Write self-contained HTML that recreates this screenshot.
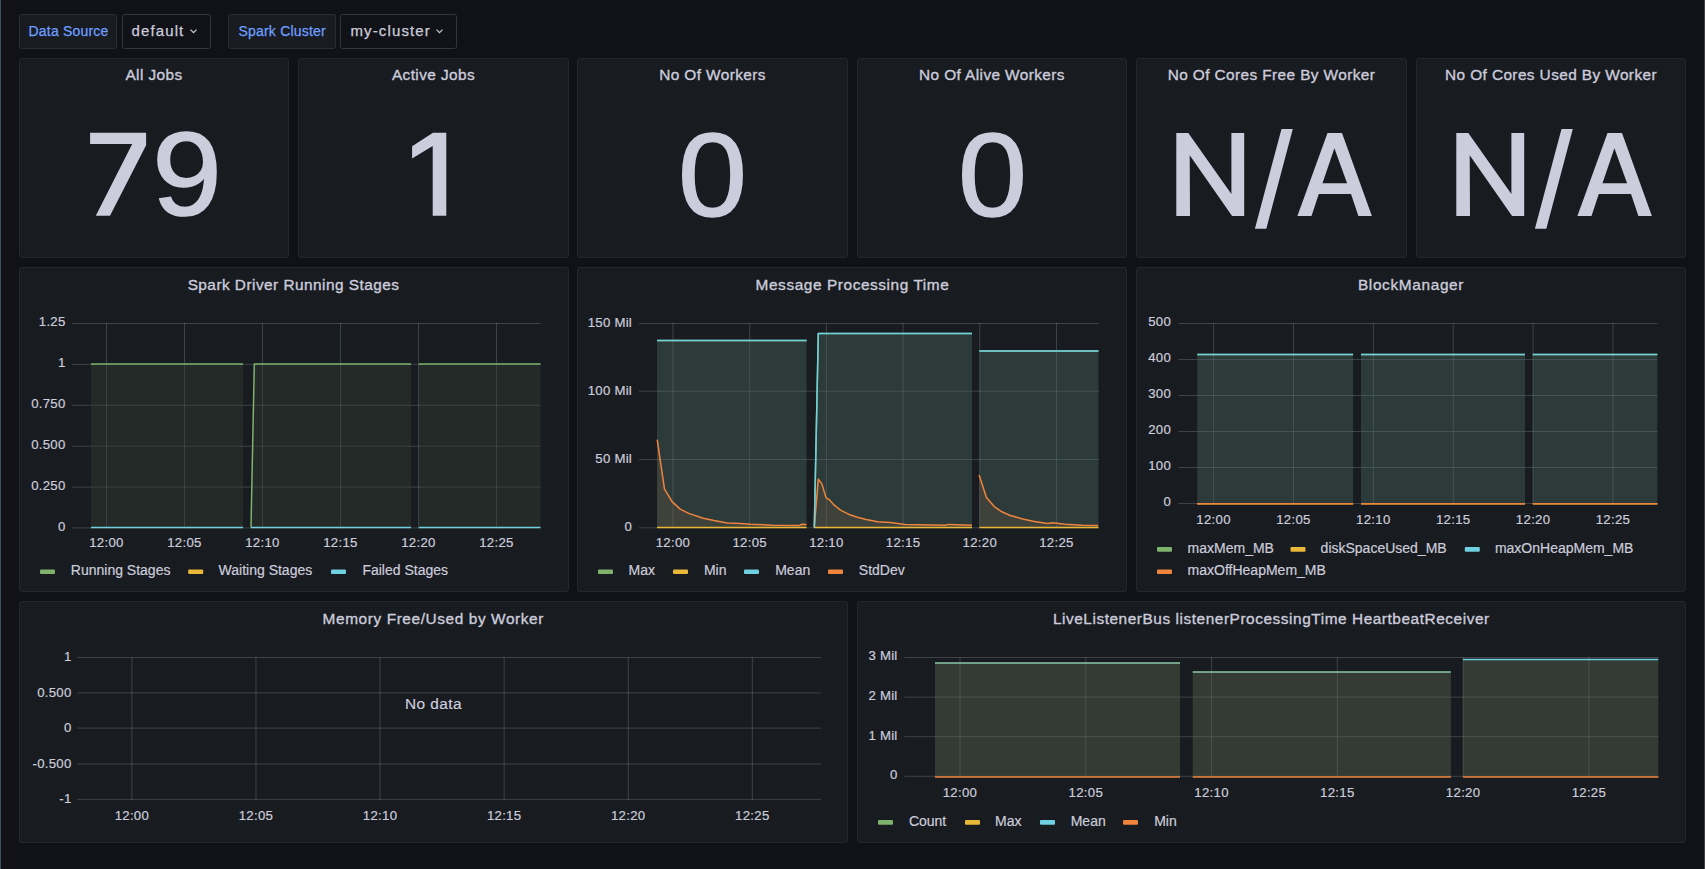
<!DOCTYPE html>
<html><head><meta charset="utf-8"><title>Spark Dashboard</title>
<style>
html,body{margin:0;padding:0;background:#111217;width:1705px;height:869px;overflow:hidden}
svg{position:absolute;left:0;top:0;font-family:'Liberation Sans', sans-serif}
</style></head><body>
<svg width="1705" height="869" viewBox="0 0 1705 869">
<rect x="0" y="0" width="1705" height="869" fill="#111217"/>
<rect x="0" y="0" width="1" height="869" fill="#3b525c"/>
<rect x="1704" y="0" width="1" height="869" fill="#434343"/>
<rect x="19.5" y="14.5" width="97" height="34" rx="2" fill="#181b1f" stroke="#2a2d33"/>
<text x="28.5" y="36" font-size="14" text-anchor="start" fill="#6e9fff" letter-spacing="0.2" font-weight="400" stroke="#6e9fff" stroke-width="0.25">Data Source</text>
<rect x="122.5" y="14.5" width="88" height="34" rx="2" fill="#111217" stroke="#34363c"/>
<text x="131.5" y="36" font-size="15" text-anchor="start" fill="#ccccdc" letter-spacing="1.12" font-weight="400" stroke="#ccccdc" stroke-width="0.25">default</text>
<path d="M190.5 29.6 L193.5 32.6 L196.5 29.6" fill="none" stroke="#ccccdc" stroke-width="1.2"/>
<rect x="228.5" y="14.5" width="107" height="34" rx="2" fill="#181b1f" stroke="#2a2d33"/>
<text x="238.5" y="36" font-size="14" text-anchor="start" fill="#6e9fff" letter-spacing="0.2" font-weight="400" stroke="#6e9fff" stroke-width="0.25">Spark Cluster</text>
<rect x="340.5" y="14.5" width="116" height="34" rx="2" fill="#111217" stroke="#34363c"/>
<text x="350.5" y="36" font-size="15" text-anchor="start" fill="#ccccdc" letter-spacing="1.12" font-weight="400" stroke="#ccccdc" stroke-width="0.25">my-cluster</text>
<path d="M436.5 29.6 L439.5 32.6 L442.5 29.6" fill="none" stroke="#ccccdc" stroke-width="1.2"/>
<rect x="19.5" y="58.5" width="269" height="199" rx="2.5" ry="2.5" fill="#181b1f" stroke="#25272c" stroke-width="1"/>
<text x="154.0" y="80.3" font-size="15.4" text-anchor="middle" fill="#ccccdc" letter-spacing="0.4" font-weight="400" stroke="#ccccdc" stroke-width="0.35">All Jobs</text>
<rect x="298.5" y="58.5" width="270" height="199" rx="2.5" ry="2.5" fill="#181b1f" stroke="#25272c" stroke-width="1"/>
<text x="433.5" y="80.3" font-size="15.4" text-anchor="middle" fill="#ccccdc" letter-spacing="0.4" font-weight="400" stroke="#ccccdc" stroke-width="0.35">Active Jobs</text>
<rect x="577.5" y="58.5" width="270" height="199" rx="2.5" ry="2.5" fill="#181b1f" stroke="#25272c" stroke-width="1"/>
<text x="712.5" y="80.3" font-size="15.4" text-anchor="middle" fill="#ccccdc" letter-spacing="0.4" font-weight="400" stroke="#ccccdc" stroke-width="0.35">No Of Workers</text>
<rect x="857.5" y="58.5" width="269" height="199" rx="2.5" ry="2.5" fill="#181b1f" stroke="#25272c" stroke-width="1"/>
<text x="992.0" y="80.3" font-size="15.4" text-anchor="middle" fill="#ccccdc" letter-spacing="0.4" font-weight="400" stroke="#ccccdc" stroke-width="0.35">No Of Alive Workers</text>
<rect x="1136.5" y="58.5" width="270" height="199" rx="2.5" ry="2.5" fill="#181b1f" stroke="#25272c" stroke-width="1"/>
<text x="1271.5" y="80.3" font-size="15.4" text-anchor="middle" fill="#ccccdc" letter-spacing="0.4" font-weight="400" stroke="#ccccdc" stroke-width="0.35">No Of Cores Free By Worker</text>
<rect x="1416.5" y="58.5" width="269" height="199" rx="2.5" ry="2.5" fill="#181b1f" stroke="#25272c" stroke-width="1"/>
<text x="1551.0" y="80.3" font-size="15.4" text-anchor="middle" fill="#ccccdc" letter-spacing="0.4" font-weight="400" stroke="#ccccdc" stroke-width="0.35">No Of Cores Used By Worker</text>
<path d="M90.10 132.70 L146.10 132.70 L146.10 145.30 L110.00 215.80 L95.80 215.80 L132.20 144.10 L90.10 144.10 Z" fill="#ccccdc"/>
<g transform="translate(187 0) scale(1.06 1) translate(-187 0)"><text x="187" y="215.3" font-size="118" text-anchor="middle" fill="#ccccdc" stroke="#ccccdc" stroke-width="1.7">9</text></g>
<path d="M412.10 146.20 L433.00 132.70 L446.30 132.70 L446.30 215.80 L432.70 215.80 L432.70 146.00 L412.10 158.60 Z" fill="#ccccdc"/>
<g transform="translate(712.4 0) scale(1.05 1) translate(-712.4 0)"><text x="712.4" y="216.1" font-size="118" text-anchor="middle" fill="#ccccdc" stroke="#ccccdc" stroke-width="1.6">0</text></g>
<g transform="translate(992.4 0) scale(1.05 1) translate(-992.4 0)"><text x="992.4" y="216.1" font-size="118" text-anchor="middle" fill="#ccccdc" stroke="#ccccdc" stroke-width="1.6">0</text></g>
<path d="M1176.30 133.10 L1188.30 133.10 L1231.40 193.90 L1231.40 133.10 L1244.20 133.10 L1244.20 216.00 L1232.10 216.00 L1189.70 155.20 L1190.00 216.00 L1176.30 216.00 Z M1281.50 129.00 L1292.80 129.00 L1266.30 228.70 L1254.90 228.70 Z M1327.50 133.10 L1342.00 133.10 L1371.90 216.00 L1358.40 216.00 L1351.00 193.90 L1318.80 193.90 L1311.50 216.00 L1297.40 216.00 Z M1334.40 148.30 L1347.10 183.20 L1322.50 183.20 Z" fill="#ccccdc" fill-rule="evenodd"/>
<path d="M1456.30 133.10 L1468.30 133.10 L1511.40 193.90 L1511.40 133.10 L1524.20 133.10 L1524.20 216.00 L1512.10 216.00 L1469.70 155.20 L1470.00 216.00 L1456.30 216.00 Z M1561.50 129.00 L1572.80 129.00 L1546.30 228.70 L1534.90 228.70 Z M1607.50 133.10 L1622.00 133.10 L1651.90 216.00 L1638.40 216.00 L1631.00 193.90 L1598.80 193.90 L1591.50 216.00 L1577.40 216.00 Z M1614.40 148.30 L1627.10 183.20 L1602.50 183.20 Z" fill="#ccccdc" fill-rule="evenodd"/>
<rect x="19.5" y="267.5" width="549" height="324" rx="2.5" ry="2.5" fill="#181b1f" stroke="#25272c" stroke-width="1"/>
<text x="293.5" y="290" font-size="15.4" text-anchor="middle" fill="#ccccdc" letter-spacing="0.46" font-weight="400" stroke="#ccccdc" stroke-width="0.35">Spark Driver Running Stages</text>
<text x="65.5" y="326.4" font-size="13.2" text-anchor="end" fill="#ccccdc" letter-spacing="0.25" font-weight="400" stroke="#ccccdc" stroke-width="0.2">1.25</text>
<text x="65.5" y="367.29999999999995" font-size="13.2" text-anchor="end" fill="#ccccdc" letter-spacing="0.25" font-weight="400" stroke="#ccccdc" stroke-width="0.2">1</text>
<text x="65.5" y="408.2" font-size="13.2" text-anchor="end" fill="#ccccdc" letter-spacing="0.25" font-weight="400" stroke="#ccccdc" stroke-width="0.2">0.750</text>
<text x="65.5" y="449.09999999999997" font-size="13.2" text-anchor="end" fill="#ccccdc" letter-spacing="0.25" font-weight="400" stroke="#ccccdc" stroke-width="0.2">0.500</text>
<text x="65.5" y="490.0" font-size="13.2" text-anchor="end" fill="#ccccdc" letter-spacing="0.25" font-weight="400" stroke="#ccccdc" stroke-width="0.2">0.250</text>
<text x="65.5" y="530.8" font-size="13.2" text-anchor="end" fill="#ccccdc" letter-spacing="0.25" font-weight="400" stroke="#ccccdc" stroke-width="0.2">0</text>
<text x="106.5" y="547" font-size="13.2" text-anchor="middle" fill="#ccccdc" letter-spacing="0.3" font-weight="400" stroke="#ccccdc" stroke-width="0.2">12:00</text>
<text x="184.5" y="547" font-size="13.2" text-anchor="middle" fill="#ccccdc" letter-spacing="0.3" font-weight="400" stroke="#ccccdc" stroke-width="0.2">12:05</text>
<text x="262.5" y="547" font-size="13.2" text-anchor="middle" fill="#ccccdc" letter-spacing="0.3" font-weight="400" stroke="#ccccdc" stroke-width="0.2">12:10</text>
<text x="340.5" y="547" font-size="13.2" text-anchor="middle" fill="#ccccdc" letter-spacing="0.3" font-weight="400" stroke="#ccccdc" stroke-width="0.2">12:15</text>
<text x="418.5" y="547" font-size="13.2" text-anchor="middle" fill="#ccccdc" letter-spacing="0.3" font-weight="400" stroke="#ccccdc" stroke-width="0.2">12:20</text>
<text x="496.5" y="547" font-size="13.2" text-anchor="middle" fill="#ccccdc" letter-spacing="0.3" font-weight="400" stroke="#ccccdc" stroke-width="0.2">12:25</text>
<rect x="40" y="569.4" width="15" height="4.6" rx="1" fill="#7eb26d"/>
<text x="70.8" y="575" font-size="14" text-anchor="start" fill="#ccccdc" letter-spacing="0" font-weight="400" stroke="#ccccdc" stroke-width="0.2">Running Stages</text>
<rect x="188.2" y="569.4" width="15" height="4.6" rx="1" fill="#eab839"/>
<text x="218.6" y="575" font-size="14" text-anchor="start" fill="#ccccdc" letter-spacing="0" font-weight="400" stroke="#ccccdc" stroke-width="0.2">Waiting Stages</text>
<rect x="331" y="569.4" width="15" height="4.6" rx="1" fill="#6ed0e0"/>
<text x="362.4" y="575" font-size="14" text-anchor="start" fill="#ccccdc" letter-spacing="0" font-weight="400" stroke="#ccccdc" stroke-width="0.2">Failed Stages</text>
<line x1="72" y1="323.5" x2="540.5" y2="323.5" stroke="rgba(240,250,255,0.175)" stroke-width="1"/>
<line x1="72" y1="364.4" x2="540.5" y2="364.4" stroke="rgba(240,250,255,0.175)" stroke-width="1"/>
<line x1="72" y1="405.3" x2="540.5" y2="405.3" stroke="rgba(240,250,255,0.175)" stroke-width="1"/>
<line x1="72" y1="446.2" x2="540.5" y2="446.2" stroke="rgba(240,250,255,0.175)" stroke-width="1"/>
<line x1="72" y1="487.1" x2="540.5" y2="487.1" stroke="rgba(240,250,255,0.175)" stroke-width="1"/>
<line x1="72" y1="527.9" x2="540.5" y2="527.9" stroke="rgba(240,250,255,0.175)" stroke-width="1"/>
<line x1="106.5" y1="323" x2="106.5" y2="528.4" stroke="rgba(240,250,255,0.175)" stroke-width="1"/>
<line x1="184.5" y1="323" x2="184.5" y2="528.4" stroke="rgba(240,250,255,0.175)" stroke-width="1"/>
<line x1="262.5" y1="323" x2="262.5" y2="528.4" stroke="rgba(240,250,255,0.175)" stroke-width="1"/>
<line x1="340.5" y1="323" x2="340.5" y2="528.4" stroke="rgba(240,250,255,0.175)" stroke-width="1"/>
<line x1="418.5" y1="323" x2="418.5" y2="528.4" stroke="rgba(240,250,255,0.175)" stroke-width="1"/>
<line x1="496.5" y1="323" x2="496.5" y2="528.4" stroke="rgba(240,250,255,0.175)" stroke-width="1"/>
<path d="M91.00 364.00 L243.00 364.00 L243.00 527.0 L91.00 527.0 Z" fill="#364036" fill-opacity="0.4"/>
<path d="M251.00 527.50 L254.30 364.00 L411.00 364.00 L411.00 527.0 L251.00 527.0 Z" fill="#364036" fill-opacity="0.4"/>
<path d="M419.00 364.00 L540.50 364.00 L540.50 527.0 L419.00 527.0 Z" fill="#364036" fill-opacity="0.4"/>
<path d="M91.00 364.00 L243.00 364.00" fill="none" stroke="#7eb26d" stroke-width="1.5" stroke-linejoin="round"/>
<path d="M251.00 527.50 L254.30 364.00 L411.00 364.00" fill="none" stroke="#7eb26d" stroke-width="1.5" stroke-linejoin="round"/>
<path d="M419.00 364.00 L540.50 364.00" fill="none" stroke="#7eb26d" stroke-width="1.5" stroke-linejoin="round"/>
<path d="M91.00 527.50 L243.00 527.50" fill="none" stroke="#6ed0e0" stroke-width="1.5" stroke-linejoin="round"/>
<path d="M251.00 527.50 L411.00 527.50" fill="none" stroke="#6ed0e0" stroke-width="1.5" stroke-linejoin="round"/>
<path d="M419.00 527.50 L540.50 527.50" fill="none" stroke="#6ed0e0" stroke-width="1.5" stroke-linejoin="round"/>
<rect x="577.5" y="267.5" width="549" height="324" rx="2.5" ry="2.5" fill="#181b1f" stroke="#25272c" stroke-width="1"/>
<text x="852.5" y="290" font-size="15.4" text-anchor="middle" fill="#ccccdc" letter-spacing="0.58" font-weight="400" stroke="#ccccdc" stroke-width="0.35">Message Processing Time</text>
<text x="632" y="326.8" font-size="13.2" text-anchor="end" fill="#ccccdc" letter-spacing="0.25" font-weight="400" stroke="#ccccdc" stroke-width="0.2">150 Mil</text>
<text x="632" y="394.5" font-size="13.2" text-anchor="end" fill="#ccccdc" letter-spacing="0.25" font-weight="400" stroke="#ccccdc" stroke-width="0.2">100 Mil</text>
<text x="632" y="462.8" font-size="13.2" text-anchor="end" fill="#ccccdc" letter-spacing="0.25" font-weight="400" stroke="#ccccdc" stroke-width="0.2">50 Mil</text>
<text x="632" y="531.0999999999999" font-size="13.2" text-anchor="end" fill="#ccccdc" letter-spacing="0.25" font-weight="400" stroke="#ccccdc" stroke-width="0.2">0</text>
<text x="673.0" y="547" font-size="13.2" text-anchor="middle" fill="#ccccdc" letter-spacing="0.3" font-weight="400" stroke="#ccccdc" stroke-width="0.2">12:00</text>
<text x="749.7" y="547" font-size="13.2" text-anchor="middle" fill="#ccccdc" letter-spacing="0.3" font-weight="400" stroke="#ccccdc" stroke-width="0.2">12:05</text>
<text x="826.4" y="547" font-size="13.2" text-anchor="middle" fill="#ccccdc" letter-spacing="0.3" font-weight="400" stroke="#ccccdc" stroke-width="0.2">12:10</text>
<text x="903.1" y="547" font-size="13.2" text-anchor="middle" fill="#ccccdc" letter-spacing="0.3" font-weight="400" stroke="#ccccdc" stroke-width="0.2">12:15</text>
<text x="979.8" y="547" font-size="13.2" text-anchor="middle" fill="#ccccdc" letter-spacing="0.3" font-weight="400" stroke="#ccccdc" stroke-width="0.2">12:20</text>
<text x="1056.5" y="547" font-size="13.2" text-anchor="middle" fill="#ccccdc" letter-spacing="0.3" font-weight="400" stroke="#ccccdc" stroke-width="0.2">12:25</text>
<rect x="598" y="569.4" width="15" height="4.6" rx="1" fill="#7eb26d"/>
<text x="628.5" y="575" font-size="14" text-anchor="start" fill="#ccccdc" letter-spacing="0" font-weight="400" stroke="#ccccdc" stroke-width="0.2">Max</text>
<rect x="673" y="569.4" width="15" height="4.6" rx="1" fill="#eab839"/>
<text x="703.9" y="575" font-size="14" text-anchor="start" fill="#ccccdc" letter-spacing="0" font-weight="400" stroke="#ccccdc" stroke-width="0.2">Min</text>
<rect x="744" y="569.4" width="15" height="4.6" rx="1" fill="#6ed0e0"/>
<text x="775.2" y="575" font-size="14" text-anchor="start" fill="#ccccdc" letter-spacing="0" font-weight="400" stroke="#ccccdc" stroke-width="0.2">Mean</text>
<rect x="828" y="569.4" width="15" height="4.6" rx="1" fill="#ef843c"/>
<text x="858.8" y="575" font-size="14" text-anchor="start" fill="#ccccdc" letter-spacing="0" font-weight="400" stroke="#ccccdc" stroke-width="0.2">StdDev</text>
<line x1="639" y1="323.5" x2="1099" y2="323.5" stroke="rgba(240,250,255,0.175)" stroke-width="1"/>
<line x1="639" y1="391.2" x2="1099" y2="391.2" stroke="rgba(240,250,255,0.175)" stroke-width="1"/>
<line x1="639" y1="459.5" x2="1099" y2="459.5" stroke="rgba(240,250,255,0.175)" stroke-width="1"/>
<line x1="639" y1="527.8" x2="1099" y2="527.8" stroke="rgba(240,250,255,0.175)" stroke-width="1"/>
<line x1="673.0" y1="323" x2="673.0" y2="528.3" stroke="rgba(240,250,255,0.175)" stroke-width="1"/>
<line x1="749.7" y1="323" x2="749.7" y2="528.3" stroke="rgba(240,250,255,0.175)" stroke-width="1"/>
<line x1="826.4" y1="323" x2="826.4" y2="528.3" stroke="rgba(240,250,255,0.175)" stroke-width="1"/>
<line x1="903.1" y1="323" x2="903.1" y2="528.3" stroke="rgba(240,250,255,0.175)" stroke-width="1"/>
<line x1="979.8" y1="323" x2="979.8" y2="528.3" stroke="rgba(240,250,255,0.175)" stroke-width="1"/>
<line x1="1056.5" y1="323" x2="1056.5" y2="528.3" stroke="rgba(240,250,255,0.175)" stroke-width="1"/>
<path d="M657.00 340.40 L806.60 340.40 L806.60 527.5 L657.00 527.5 Z" fill="#4a6b65" fill-opacity="0.4"/>
<path d="M814.30 527.50 L818.30 333.50 L972.00 333.50 L972.00 527.5 L814.30 527.5 Z" fill="#4a6b65" fill-opacity="0.4"/>
<path d="M979.40 350.90 L1098.50 350.90 L1098.50 527.5 L979.40 527.5 Z" fill="#4a6b65" fill-opacity="0.4"/>
<path d="M657.20 439.70 L664.50 489.20 L672.30 501.90 L680.20 509.10 L688.70 513.40 L703.20 518.20 L714.00 520.60 L727.30 523.00 L740.00 523.60 L749.80 524.30 L772.30 525.20 L798.80 525.60 L802.10 524.30 L806.60 524.60 L806.60 527.5 L657.20 527.5 Z" fill="#ef843c" fill-opacity="0.1"/>
<path d="M814.30 527.50 L818.30 479.10 L821.90 483.90 L826.00 497.60 L829.20 499.60 L834.00 504.90 L840.50 510.10 L848.50 514.20 L856.60 517.00 L866.20 519.40 L877.50 521.80 L890.40 522.60 L905.00 524.60 L946.00 525.30 L948.40 524.40 L972.00 525.30 L972.00 527.5 L814.30 527.5 Z" fill="#ef843c" fill-opacity="0.1"/>
<path d="M979.10 475.10 L986.40 497.50 L994.20 506.60 L1001.90 511.80 L1009.70 515.20 L1021.80 518.70 L1033.00 521.30 L1047.70 523.40 L1052.90 522.80 L1064.90 524.30 L1082.20 525.20 L1098.20 525.40 L1098.20 527.5 L979.10 527.5 Z" fill="#ef843c" fill-opacity="0.1"/>
<path d="M657.00 340.40 L806.60 340.40" fill="none" stroke="#7eb26d" stroke-width="1.5" stroke-linejoin="round"/>
<path d="M814.30 527.50 L818.30 333.50 L972.00 333.50" fill="none" stroke="#7eb26d" stroke-width="1.5" stroke-linejoin="round"/>
<path d="M979.40 350.90 L1098.50 350.90" fill="none" stroke="#7eb26d" stroke-width="1.5" stroke-linejoin="round"/>
<path d="M657.20 439.70 L664.50 489.20 L672.30 501.90 L680.20 509.10 L688.70 513.40 L703.20 518.20 L714.00 520.60 L727.30 523.00 L740.00 523.60 L749.80 524.30 L772.30 525.20 L798.80 525.60 L802.10 524.30 L806.60 524.60" fill="none" stroke="#ef843c" stroke-width="1.5" stroke-linejoin="round"/>
<path d="M814.30 527.50 L818.30 479.10 L821.90 483.90 L826.00 497.60 L829.20 499.60 L834.00 504.90 L840.50 510.10 L848.50 514.20 L856.60 517.00 L866.20 519.40 L877.50 521.80 L890.40 522.60 L905.00 524.60 L946.00 525.30 L948.40 524.40 L972.00 525.30" fill="none" stroke="#ef843c" stroke-width="1.5" stroke-linejoin="round"/>
<path d="M979.10 475.10 L986.40 497.50 L994.20 506.60 L1001.90 511.80 L1009.70 515.20 L1021.80 518.70 L1033.00 521.30 L1047.70 523.40 L1052.90 522.80 L1064.90 524.30 L1082.20 525.20 L1098.20 525.40" fill="none" stroke="#ef843c" stroke-width="1.5" stroke-linejoin="round"/>
<path d="M657.00 527.50 L806.60 527.50" fill="none" stroke="#eab839" stroke-width="1.5" stroke-linejoin="round"/>
<path d="M814.30 527.50 L972.00 527.50" fill="none" stroke="#eab839" stroke-width="1.5" stroke-linejoin="round"/>
<path d="M979.40 527.50 L1098.50 527.50" fill="none" stroke="#eab839" stroke-width="1.5" stroke-linejoin="round"/>
<path d="M657.00 340.40 L806.60 340.40" fill="none" stroke="#6ed0e0" stroke-width="1.5" stroke-linejoin="round"/>
<path d="M814.30 527.50 L818.30 333.50 L972.00 333.50" fill="none" stroke="#6ed0e0" stroke-width="1.5" stroke-linejoin="round"/>
<path d="M979.40 350.90 L1098.50 350.90" fill="none" stroke="#6ed0e0" stroke-width="1.5" stroke-linejoin="round"/>
<rect x="1136.5" y="267.5" width="549" height="324" rx="2.5" ry="2.5" fill="#181b1f" stroke="#25272c" stroke-width="1"/>
<text x="1411" y="290" font-size="15.4" text-anchor="middle" fill="#ccccdc" letter-spacing="0.65" font-weight="400" stroke="#ccccdc" stroke-width="0.35">BlockManager</text>
<text x="1171" y="326.4" font-size="13.2" text-anchor="end" fill="#ccccdc" letter-spacing="0.25" font-weight="400" stroke="#ccccdc" stroke-width="0.2">500</text>
<text x="1171" y="362.4" font-size="13.2" text-anchor="end" fill="#ccccdc" letter-spacing="0.25" font-weight="400" stroke="#ccccdc" stroke-width="0.2">400</text>
<text x="1171" y="398.4" font-size="13.2" text-anchor="end" fill="#ccccdc" letter-spacing="0.25" font-weight="400" stroke="#ccccdc" stroke-width="0.2">300</text>
<text x="1171" y="434.4" font-size="13.2" text-anchor="end" fill="#ccccdc" letter-spacing="0.25" font-weight="400" stroke="#ccccdc" stroke-width="0.2">200</text>
<text x="1171" y="470.4" font-size="13.2" text-anchor="end" fill="#ccccdc" letter-spacing="0.25" font-weight="400" stroke="#ccccdc" stroke-width="0.2">100</text>
<text x="1171" y="506.4" font-size="13.2" text-anchor="end" fill="#ccccdc" letter-spacing="0.25" font-weight="400" stroke="#ccccdc" stroke-width="0.2">0</text>
<text x="1213.6" y="524" font-size="13.2" text-anchor="middle" fill="#ccccdc" letter-spacing="0.3" font-weight="400" stroke="#ccccdc" stroke-width="0.2">12:00</text>
<text x="1293.48" y="524" font-size="13.2" text-anchor="middle" fill="#ccccdc" letter-spacing="0.3" font-weight="400" stroke="#ccccdc" stroke-width="0.2">12:05</text>
<text x="1373.36" y="524" font-size="13.2" text-anchor="middle" fill="#ccccdc" letter-spacing="0.3" font-weight="400" stroke="#ccccdc" stroke-width="0.2">12:10</text>
<text x="1453.2399999999998" y="524" font-size="13.2" text-anchor="middle" fill="#ccccdc" letter-spacing="0.3" font-weight="400" stroke="#ccccdc" stroke-width="0.2">12:15</text>
<text x="1533.12" y="524" font-size="13.2" text-anchor="middle" fill="#ccccdc" letter-spacing="0.3" font-weight="400" stroke="#ccccdc" stroke-width="0.2">12:20</text>
<text x="1613.0" y="524" font-size="13.2" text-anchor="middle" fill="#ccccdc" letter-spacing="0.3" font-weight="400" stroke="#ccccdc" stroke-width="0.2">12:25</text>
<rect x="1157" y="547.1" width="15" height="4.6" rx="1" fill="#7eb26d"/>
<text x="1187.6" y="552.7" font-size="14" text-anchor="start" fill="#ccccdc" letter-spacing="0" font-weight="400" stroke="#ccccdc" stroke-width="0.2">maxMem_MB</text>
<rect x="1290.5" y="547.1" width="15" height="4.6" rx="1" fill="#eab839"/>
<text x="1320.6" y="552.7" font-size="14" text-anchor="start" fill="#ccccdc" letter-spacing="0" font-weight="400" stroke="#ccccdc" stroke-width="0.2">diskSpaceUsed_MB</text>
<rect x="1464.8" y="547.1" width="15" height="4.6" rx="1" fill="#6ed0e0"/>
<text x="1494.9" y="552.7" font-size="14" text-anchor="start" fill="#ccccdc" letter-spacing="0" font-weight="400" stroke="#ccccdc" stroke-width="0.2">maxOnHeapMem_MB</text>
<rect x="1157" y="569.4" width="15" height="4.6" rx="1" fill="#ef843c"/>
<text x="1187.6" y="575" font-size="14" text-anchor="start" fill="#ccccdc" letter-spacing="0" font-weight="400" stroke="#ccccdc" stroke-width="0.2">maxOffHeapMem_MB</text>
<line x1="1178" y1="323.5" x2="1657.5" y2="323.5" stroke="rgba(240,250,255,0.175)" stroke-width="1"/>
<line x1="1178" y1="359.5" x2="1657.5" y2="359.5" stroke="rgba(240,250,255,0.175)" stroke-width="1"/>
<line x1="1178" y1="395.5" x2="1657.5" y2="395.5" stroke="rgba(240,250,255,0.175)" stroke-width="1"/>
<line x1="1178" y1="431.5" x2="1657.5" y2="431.5" stroke="rgba(240,250,255,0.175)" stroke-width="1"/>
<line x1="1178" y1="467.5" x2="1657.5" y2="467.5" stroke="rgba(240,250,255,0.175)" stroke-width="1"/>
<line x1="1178" y1="503.5" x2="1657.5" y2="503.5" stroke="rgba(240,250,255,0.175)" stroke-width="1"/>
<line x1="1213.6" y1="323" x2="1213.6" y2="504" stroke="rgba(240,250,255,0.175)" stroke-width="1"/>
<line x1="1293.48" y1="323" x2="1293.48" y2="504" stroke="rgba(240,250,255,0.175)" stroke-width="1"/>
<line x1="1373.36" y1="323" x2="1373.36" y2="504" stroke="rgba(240,250,255,0.175)" stroke-width="1"/>
<line x1="1453.2399999999998" y1="323" x2="1453.2399999999998" y2="504" stroke="rgba(240,250,255,0.175)" stroke-width="1"/>
<line x1="1533.12" y1="323" x2="1533.12" y2="504" stroke="rgba(240,250,255,0.175)" stroke-width="1"/>
<line x1="1613.0" y1="323" x2="1613.0" y2="504" stroke="rgba(240,250,255,0.175)" stroke-width="1"/>
<path d="M1197.30 354.40 L1353.10 354.40 L1353.10 503.5 L1197.30 503.5 Z" fill="#4a6b65" fill-opacity="0.4"/>
<path d="M1361.00 354.40 L1525.00 354.40 L1525.00 503.5 L1361.00 503.5 Z" fill="#4a6b65" fill-opacity="0.4"/>
<path d="M1532.80 354.40 L1657.30 354.40 L1657.30 503.5 L1532.80 503.5 Z" fill="#4a6b65" fill-opacity="0.4"/>
<path d="M1197.30 354.40 L1353.10 354.40" fill="none" stroke="#7eb26d" stroke-width="1.5" stroke-linejoin="round"/>
<path d="M1197.30 503.80 L1353.10 503.80" fill="none" stroke="#eab839" stroke-width="1.5" stroke-linejoin="round"/>
<path d="M1197.30 354.40 L1353.10 354.40" fill="none" stroke="#6ed0e0" stroke-width="1.5" stroke-linejoin="round"/>
<path d="M1197.30 503.80 L1353.10 503.80" fill="none" stroke="#ef843c" stroke-width="1.5" stroke-linejoin="round"/>
<path d="M1361.00 354.40 L1525.00 354.40" fill="none" stroke="#7eb26d" stroke-width="1.5" stroke-linejoin="round"/>
<path d="M1361.00 503.80 L1525.00 503.80" fill="none" stroke="#eab839" stroke-width="1.5" stroke-linejoin="round"/>
<path d="M1361.00 354.40 L1525.00 354.40" fill="none" stroke="#6ed0e0" stroke-width="1.5" stroke-linejoin="round"/>
<path d="M1361.00 503.80 L1525.00 503.80" fill="none" stroke="#ef843c" stroke-width="1.5" stroke-linejoin="round"/>
<path d="M1532.80 354.40 L1657.30 354.40" fill="none" stroke="#7eb26d" stroke-width="1.5" stroke-linejoin="round"/>
<path d="M1532.80 503.80 L1657.30 503.80" fill="none" stroke="#eab839" stroke-width="1.5" stroke-linejoin="round"/>
<path d="M1532.80 354.40 L1657.30 354.40" fill="none" stroke="#6ed0e0" stroke-width="1.5" stroke-linejoin="round"/>
<path d="M1532.80 503.80 L1657.30 503.80" fill="none" stroke="#ef843c" stroke-width="1.5" stroke-linejoin="round"/>
<rect x="19.5" y="601.5" width="828" height="241" rx="2.5" ry="2.5" fill="#181b1f" stroke="#25272c" stroke-width="1"/>
<text x="433.3" y="624.4" font-size="15.4" text-anchor="middle" fill="#ccccdc" letter-spacing="0.6" font-weight="400" stroke="#ccccdc" stroke-width="0.35">Memory Free/Used by Worker</text>
<text x="71.5" y="661.2" font-size="13.2" text-anchor="end" fill="#ccccdc" letter-spacing="0.25" font-weight="400" stroke="#ccccdc" stroke-width="0.2">1</text>
<text x="71.5" y="696.6" font-size="13.2" text-anchor="end" fill="#ccccdc" letter-spacing="0.25" font-weight="400" stroke="#ccccdc" stroke-width="0.2">0.500</text>
<text x="71.5" y="731.8000000000001" font-size="13.2" text-anchor="end" fill="#ccccdc" letter-spacing="0.25" font-weight="400" stroke="#ccccdc" stroke-width="0.2">0</text>
<text x="71.5" y="767.7" font-size="13.2" text-anchor="end" fill="#ccccdc" letter-spacing="0.25" font-weight="400" stroke="#ccccdc" stroke-width="0.2">-0.500</text>
<text x="71.5" y="803.1" font-size="13.2" text-anchor="end" fill="#ccccdc" letter-spacing="0.25" font-weight="400" stroke="#ccccdc" stroke-width="0.2">-1</text>
<text x="131.9" y="819.8" font-size="13.2" text-anchor="middle" fill="#ccccdc" letter-spacing="0.3" font-weight="400" stroke="#ccccdc" stroke-width="0.2">12:00</text>
<text x="255.98000000000002" y="819.8" font-size="13.2" text-anchor="middle" fill="#ccccdc" letter-spacing="0.3" font-weight="400" stroke="#ccccdc" stroke-width="0.2">12:05</text>
<text x="380.06" y="819.8" font-size="13.2" text-anchor="middle" fill="#ccccdc" letter-spacing="0.3" font-weight="400" stroke="#ccccdc" stroke-width="0.2">12:10</text>
<text x="504.14" y="819.8" font-size="13.2" text-anchor="middle" fill="#ccccdc" letter-spacing="0.3" font-weight="400" stroke="#ccccdc" stroke-width="0.2">12:15</text>
<text x="628.22" y="819.8" font-size="13.2" text-anchor="middle" fill="#ccccdc" letter-spacing="0.3" font-weight="400" stroke="#ccccdc" stroke-width="0.2">12:20</text>
<text x="752.3" y="819.8" font-size="13.2" text-anchor="middle" fill="#ccccdc" letter-spacing="0.3" font-weight="400" stroke="#ccccdc" stroke-width="0.2">12:25</text>
<text x="433.5" y="709" font-size="15.4" text-anchor="middle" fill="#ccccdc" letter-spacing="0.45" font-weight="400" stroke="#ccccdc" stroke-width="0.2">No data</text>
<line x1="77.2" y1="657.5" x2="821" y2="657.5" stroke="rgba(240,250,255,0.175)" stroke-width="1"/>
<line x1="77.2" y1="692.9" x2="821" y2="692.9" stroke="rgba(240,250,255,0.175)" stroke-width="1"/>
<line x1="77.2" y1="728.1" x2="821" y2="728.1" stroke="rgba(240,250,255,0.175)" stroke-width="1"/>
<line x1="77.2" y1="764.0" x2="821" y2="764.0" stroke="rgba(240,250,255,0.175)" stroke-width="1"/>
<line x1="77.2" y1="799.4" x2="821" y2="799.4" stroke="rgba(240,250,255,0.175)" stroke-width="1"/>
<line x1="131.9" y1="657" x2="131.9" y2="800" stroke="rgba(240,250,255,0.175)" stroke-width="1"/>
<line x1="255.98000000000002" y1="657" x2="255.98000000000002" y2="800" stroke="rgba(240,250,255,0.175)" stroke-width="1"/>
<line x1="380.06" y1="657" x2="380.06" y2="800" stroke="rgba(240,250,255,0.175)" stroke-width="1"/>
<line x1="504.14" y1="657" x2="504.14" y2="800" stroke="rgba(240,250,255,0.175)" stroke-width="1"/>
<line x1="628.22" y1="657" x2="628.22" y2="800" stroke="rgba(240,250,255,0.175)" stroke-width="1"/>
<line x1="752.3" y1="657" x2="752.3" y2="800" stroke="rgba(240,250,255,0.175)" stroke-width="1"/>
<rect x="857.5" y="601.5" width="828" height="241" rx="2.5" ry="2.5" fill="#181b1f" stroke="#25272c" stroke-width="1"/>
<text x="1271.3" y="624.4" font-size="15.4" text-anchor="middle" fill="#ccccdc" letter-spacing="0.555" font-weight="400" stroke="#ccccdc" stroke-width="0.35">LiveListenerBus listenerProcessingTime HeartbeatReceiver</text>
<text x="897.5" y="660.4" font-size="13.2" text-anchor="end" fill="#ccccdc" letter-spacing="0.25" font-weight="400" stroke="#ccccdc" stroke-width="0.2">3 Mil</text>
<text x="897.5" y="700.0" font-size="13.2" text-anchor="end" fill="#ccccdc" letter-spacing="0.25" font-weight="400" stroke="#ccccdc" stroke-width="0.2">2 Mil</text>
<text x="897.5" y="739.6" font-size="13.2" text-anchor="end" fill="#ccccdc" letter-spacing="0.25" font-weight="400" stroke="#ccccdc" stroke-width="0.2">1 Mil</text>
<text x="897.5" y="779.1999999999999" font-size="13.2" text-anchor="end" fill="#ccccdc" letter-spacing="0.25" font-weight="400" stroke="#ccccdc" stroke-width="0.2">0</text>
<text x="960.0" y="797" font-size="13.2" text-anchor="middle" fill="#ccccdc" letter-spacing="0.3" font-weight="400" stroke="#ccccdc" stroke-width="0.2">12:00</text>
<text x="1085.78" y="797" font-size="13.2" text-anchor="middle" fill="#ccccdc" letter-spacing="0.3" font-weight="400" stroke="#ccccdc" stroke-width="0.2">12:05</text>
<text x="1211.56" y="797" font-size="13.2" text-anchor="middle" fill="#ccccdc" letter-spacing="0.3" font-weight="400" stroke="#ccccdc" stroke-width="0.2">12:10</text>
<text x="1337.3400000000001" y="797" font-size="13.2" text-anchor="middle" fill="#ccccdc" letter-spacing="0.3" font-weight="400" stroke="#ccccdc" stroke-width="0.2">12:15</text>
<text x="1463.12" y="797" font-size="13.2" text-anchor="middle" fill="#ccccdc" letter-spacing="0.3" font-weight="400" stroke="#ccccdc" stroke-width="0.2">12:20</text>
<text x="1588.9" y="797" font-size="13.2" text-anchor="middle" fill="#ccccdc" letter-spacing="0.3" font-weight="400" stroke="#ccccdc" stroke-width="0.2">12:25</text>
<rect x="878" y="820.1" width="15" height="4.6" rx="1" fill="#7eb26d"/>
<text x="908.9" y="825.7" font-size="14" text-anchor="start" fill="#ccccdc" letter-spacing="0" font-weight="400" stroke="#ccccdc" stroke-width="0.2">Count</text>
<rect x="965" y="820.1" width="15" height="4.6" rx="1" fill="#eab839"/>
<text x="995" y="825.7" font-size="14" text-anchor="start" fill="#ccccdc" letter-spacing="0" font-weight="400" stroke="#ccccdc" stroke-width="0.2">Max</text>
<rect x="1040" y="820.1" width="15" height="4.6" rx="1" fill="#6ed0e0"/>
<text x="1070.7" y="825.7" font-size="14" text-anchor="start" fill="#ccccdc" letter-spacing="0" font-weight="400" stroke="#ccccdc" stroke-width="0.2">Mean</text>
<rect x="1123" y="820.1" width="15" height="4.6" rx="1" fill="#ef843c"/>
<text x="1154.2" y="825.7" font-size="14" text-anchor="start" fill="#ccccdc" letter-spacing="0" font-weight="400" stroke="#ccccdc" stroke-width="0.2">Min</text>
<line x1="904.5" y1="657.5" x2="1658.7" y2="657.5" stroke="rgba(240,250,255,0.175)" stroke-width="1"/>
<line x1="904.5" y1="697.1" x2="1658.7" y2="697.1" stroke="rgba(240,250,255,0.175)" stroke-width="1"/>
<line x1="904.5" y1="736.7" x2="1658.7" y2="736.7" stroke="rgba(240,250,255,0.175)" stroke-width="1"/>
<line x1="904.5" y1="776.3" x2="1658.7" y2="776.3" stroke="rgba(240,250,255,0.175)" stroke-width="1"/>
<line x1="960.0" y1="657" x2="960.0" y2="777" stroke="rgba(240,250,255,0.175)" stroke-width="1"/>
<line x1="1085.78" y1="657" x2="1085.78" y2="777" stroke="rgba(240,250,255,0.175)" stroke-width="1"/>
<line x1="1211.56" y1="657" x2="1211.56" y2="777" stroke="rgba(240,250,255,0.175)" stroke-width="1"/>
<line x1="1337.3400000000001" y1="657" x2="1337.3400000000001" y2="777" stroke="rgba(240,250,255,0.175)" stroke-width="1"/>
<line x1="1463.12" y1="657" x2="1463.12" y2="777" stroke="rgba(240,250,255,0.175)" stroke-width="1"/>
<line x1="1588.9" y1="657" x2="1588.9" y2="777" stroke="rgba(240,250,255,0.175)" stroke-width="1"/>
<path d="M935.00 662.90 L1180.00 662.90 L1180.00 776.9 L935.00 776.9 Z" fill="#606b54" fill-opacity="0.4"/>
<path d="M1192.70 671.90 L1450.90 671.90 L1450.90 776.9 L1192.70 776.9 Z" fill="#606b54" fill-opacity="0.4"/>
<path d="M1463.00 659.50 L1658.30 659.50 L1658.30 776.9 L1463.00 776.9 Z" fill="#606b54" fill-opacity="0.4"/>
<path d="M935.00 662.90 L1180.00 662.90" fill="none" stroke="#8cc9a8" stroke-width="1.5" stroke-linejoin="round"/>
<path d="M1192.70 671.90 L1450.90 671.90" fill="none" stroke="#8cc9a8" stroke-width="1.5" stroke-linejoin="round"/>
<path d="M1463.00 659.50 L1658.30 659.50" fill="none" stroke="#6ed0e0" stroke-width="1.5" stroke-linejoin="round"/>
<path d="M935.00 777.00 L1180.00 777.00" fill="none" stroke="#ef843c" stroke-width="1.5" stroke-linejoin="round"/>
<path d="M1192.70 777.00 L1450.90 777.00" fill="none" stroke="#ef843c" stroke-width="1.5" stroke-linejoin="round"/>
<path d="M1463.00 777.00 L1658.30 777.00" fill="none" stroke="#ef843c" stroke-width="1.5" stroke-linejoin="round"/>
</svg>
</body></html>
